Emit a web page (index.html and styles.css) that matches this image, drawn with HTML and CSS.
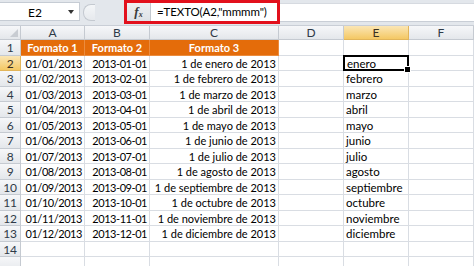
FILE: index.html
```
<!DOCTYPE HTML>
<html>

<head>
  <meta charset="utf-8">
  <link rel="stylesheet" href="styles.css">
</head>

<body>

  <div class="formula-bar">
    <div class="namebox">
      <span class="name">E2</span>
      <span class="drop"></span>
    </div>
    <div class="splitter"><span class="knob"></span></div>
    <div class="fx-frame">
      <div class="fx"><em>f</em><sub>x</sub></div>
      <div class="formula">=TEXTO(A2,"mmmm")</div>
    </div>
    <div class="formula-rest"></div>
  </div>

  <div class="sheet">
    <div class="corner"><span class="tri"></span></div>
    <div class="colhead">A</div>
    <div class="colhead">B</div>
    <div class="colhead">C</div>
    <div class="colhead">D</div>
    <div class="colhead active">E</div>
    <div class="colhead">F</div>

    <div class="rowhead">1</div>
    <div class="cell title">Formato 1</div>
    <div class="cell title">Formato 2</div>
    <div class="cell title">Formato 3</div>
    <div class="cell"></div>
    <div class="cell"></div>
    <div class="cell"></div>

    <div class="rowhead active">2</div>
    <div class="cell num date">01/01/2013</div>
    <div class="cell num date">2013-01-01</div>
    <div class="cell num long">1 de enero de 2013</div>
    <div class="cell"></div>
    <div class="cell selected">enero<span class="handle"></span></div>
    <div class="cell"></div>

    <div class="rowhead">3</div>
    <div class="cell num date">01/02/2013</div>
    <div class="cell num date">2013-02-01</div>
    <div class="cell num long">1 de febrero de 2013</div>
    <div class="cell"></div>
    <div class="cell">febrero</div>
    <div class="cell"></div>

    <div class="rowhead">4</div>
    <div class="cell num date">01/03/2013</div>
    <div class="cell num date">2013-03-01</div>
    <div class="cell num long">1 de marzo de 2013</div>
    <div class="cell"></div>
    <div class="cell">marzo</div>
    <div class="cell"></div>

    <div class="rowhead">5</div>
    <div class="cell num date">01/04/2013</div>
    <div class="cell num date">2013-04-01</div>
    <div class="cell num long">1 de abril de 2013</div>
    <div class="cell"></div>
    <div class="cell">abril</div>
    <div class="cell"></div>

    <div class="rowhead">6</div>
    <div class="cell num date">01/05/2013</div>
    <div class="cell num date">2013-05-01</div>
    <div class="cell num long">1 de mayo de 2013</div>
    <div class="cell"></div>
    <div class="cell">mayo</div>
    <div class="cell"></div>

    <div class="rowhead">7</div>
    <div class="cell num date">01/06/2013</div>
    <div class="cell num date">2013-06-01</div>
    <div class="cell num long">1 de junio de 2013</div>
    <div class="cell"></div>
    <div class="cell">junio</div>
    <div class="cell"></div>

    <div class="rowhead">8</div>
    <div class="cell num date">01/07/2013</div>
    <div class="cell num date">2013-07-01</div>
    <div class="cell num long">1 de julio de 2013</div>
    <div class="cell"></div>
    <div class="cell">julio</div>
    <div class="cell"></div>

    <div class="rowhead">9</div>
    <div class="cell num date">01/08/2013</div>
    <div class="cell num date">2013-08-01</div>
    <div class="cell num long">1 de agosto de 2013</div>
    <div class="cell"></div>
    <div class="cell">agosto</div>
    <div class="cell"></div>

    <div class="rowhead">10</div>
    <div class="cell num date">01/09/2013</div>
    <div class="cell num date">2013-09-01</div>
    <div class="cell num long">1 de septiembre de 2013</div>
    <div class="cell"></div>
    <div class="cell">septiembre</div>
    <div class="cell"></div>

    <div class="rowhead">11</div>
    <div class="cell num date">01/10/2013</div>
    <div class="cell num date">2013-10-01</div>
    <div class="cell num long">1 de octubre de 2013</div>
    <div class="cell"></div>
    <div class="cell">octubre</div>
    <div class="cell"></div>

    <div class="rowhead">12</div>
    <div class="cell num date">01/11/2013</div>
    <div class="cell num date">2013-11-01</div>
    <div class="cell num long">1 de noviembre de 2013</div>
    <div class="cell"></div>
    <div class="cell">noviembre</div>
    <div class="cell"></div>

    <div class="rowhead">13</div>
    <div class="cell num date">01/12/2013</div>
    <div class="cell num date">2013-12-01</div>
    <div class="cell num long">1 de diciembre de 2013</div>
    <div class="cell"></div>
    <div class="cell">diciembre</div>
    <div class="cell"></div>

    <div class="rowhead">14</div>
    <div class="cell"></div>
    <div class="cell"></div>
    <div class="cell"></div>
    <div class="cell"></div>
    <div class="cell"></div>
    <div class="cell"></div>

    <div class="rowhead"></div>
    <div class="cell"></div>
    <div class="cell"></div>
    <div class="cell"></div>
    <div class="cell"></div>
    <div class="cell"></div>
    <div class="cell"></div>
  </div>

</body>

</html>
```

FILE: styles.css
```
body {
  margin: 0;
  width: 474px;
  height: 266px;
  overflow: hidden;
  background: #fff;
  font-family: Lato, "Liberation Sans", sans-serif;
  font-size: 11.5px;
  color: #000;
}

/* barra de fórmulas */

.formula-bar {
  display: flex;
  height: 26px;
  background: #e3e7ec;
  box-sizing: border-box;
  border-bottom: 1px solid #c9ced6;
}

.namebox {
  width: 80px;
  height: 19px;
  margin-top: 2px;
  background: #fff;
  border: 1px solid #c6ccd4;
  border-left: none;
  box-sizing: border-box;
  position: relative;
}

.name {
  position: absolute;
  left: 28px;
  top: 2px;
  font-size: 12px;
}

.drop {
  position: absolute;
  right: 5px;
  top: 7px;
  border-left: 3px solid transparent;
  border-right: 3px solid transparent;
  border-top: 4px solid #333;
}

.splitter {
  width: 44px;
  padding: 4px 0 0 3px;
  box-sizing: border-box;
}

.knob {
  display: block;
  width: 11px;
  height: 15px;
  border-radius: 8px 0 0 8px;
  border: 1px solid #c4c9d0;
  border-right: none;
  background: linear-gradient(#f4f6f8, #e6e9ed);
}

.fx-frame {
  display: flex;
  width: 156px;
  height: 24px;
  border: 3px solid #e2101c;
  box-sizing: border-box;
  background: #fff;
}

.fx {
  width: 23px;
  background: linear-gradient(#eef0f3, #dde1e6);
  border-right: 1px solid #c3c8cf;
  font-family: "Liberation Serif", serif;
  font-size: 13px;
  font-weight: bold;
  color: #3a3a3a;
  text-align: center;
  line-height: 17px;
}

.fx sub {
  font-size: 8px;
  font-style: italic;
  vertical-align: -1px;
}

.formula {
  padding-left: 6px;
  font-size: 11.5px;
  letter-spacing: -0.1px;
  line-height: 18px;
}

.formula-rest {
  flex: 1;
  height: 17px;
  margin-top: 3px;
  background: #fff;
  border-top: 1px solid #d6dae0;
  border-bottom: 1px solid #c9ced6;
}

/* hoja */

.sheet {
  display: grid;
  grid-template-columns: 21px 64px 65px 129px 65px 65px 1fr;
  grid-template-rows: 14px repeat(15, 15.5px);
}

.corner,
.colhead,
.rowhead {
  background: linear-gradient(#f6f7f9, #e4e7eb);
  border-right: 1px solid #c5cad1;
  border-bottom: 1px solid #c5cad1;
  box-sizing: border-box;
  color: #2f3a48;
  font-size: 12px;
  text-align: center;
}

.corner {
  position: relative;
}

.tri {
  position: absolute;
  right: 2px;
  bottom: 2px;
  border-left: 8px solid transparent;
  border-bottom: 8px solid #c8ccd2;
}

.colhead {
  line-height: 13px;
}

.rowhead {
  line-height: 15px;
  letter-spacing: -0.3px;
}

.colhead.active,
.rowhead.active {
  background: linear-gradient(#fbe6b5, #f4c864);
  border-color: #e2b55a;
  color: #3a3020;
}

.cell {
  border-right: 1px solid #d9dde3;
  border-bottom: 1px solid #d9dde3;
  box-sizing: border-box;
  padding: 0 2px;
  line-height: 15px;
  white-space: nowrap;
  overflow: visible;
}

.num {
  text-align: right;
}

.date {
  font-size: 11px;
  letter-spacing: -0.45px;
}

.long {
  font-size: 11px;
}

.title {
  background: #e46c0a;
  color: #fff;
  font-weight: bold;
  font-size: 11px;
  text-align: center;
  border-color: #eb8c3e;
}

.selected {
  position: relative;
  border: 2px solid #000;
  margin: -1px 0 0 -1px;
  padding-left: 2px;
  line-height: 13px;
}

.handle {
  position: absolute;
  right: -4px;
  bottom: -4px;
  width: 5px;
  height: 5px;
  background: #000;
  border: 1px solid #fff;
}
```
